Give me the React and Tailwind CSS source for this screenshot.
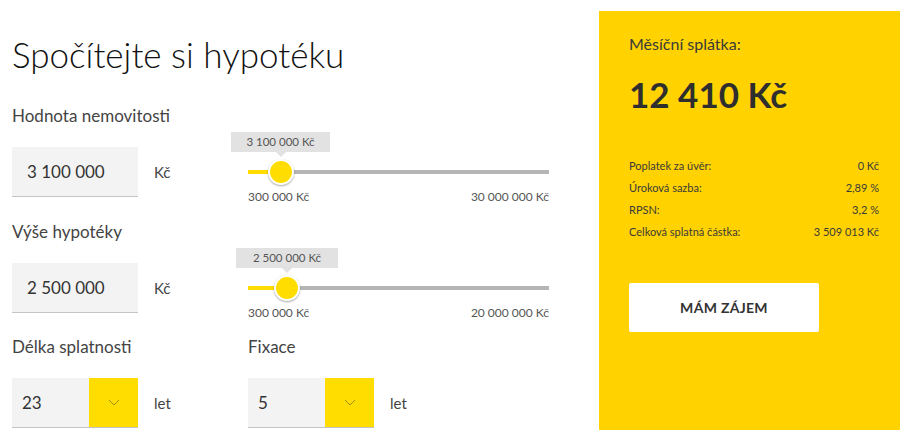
import React from "react";

const sliders = {
  price: { tip: "3 100 000 Kč", min: "300 000 Kč", max: "30 000 000 Kč" },
  loan: { tip: "2 500 000 Kč", min: "300 000 Kč", max: "20 000 000 Kč" },
};

const summary = [
  ["Poplatek za úvěr:", "0 Kč"],
  ["Úroková sazba:", "2,89 %"],
  ["RPSN:", "3,2 %"],
  ["Celková splatná částka:", "3 509 013 Kč"],
];

const Chevron = () => (
  <svg width="12" height="7" viewBox="0 0 12 7" fill="none">
    <path d="M1 1l5 5 5-5" stroke="#9c8a12" strokeWidth="1" />
  </svg>
);

const Slider = ({ tip, min, max, thumb, fill, tipLeft, tipWidth }) => (
  <div className="w-[301px]">
    <div className="relative h-[50px] flex items-center">
      <div className={`h-[4px] bg-[#ffdd00] ${fill}`}></div>
      <div className="h-[4px] flex-1 bg-[#b5b5b5]"></div>
      <div
        className={`absolute top-[-15px] h-[20px] bg-[#e2e2e2] text-[11.5px] leading-[20px] text-[#555] text-center ${tipLeft} ${tipWidth}`}
      >
        {tip}
        <span className="absolute left-1/2 -translate-x-1/2 top-full w-0 h-0 border-x-[5px] border-x-transparent border-t-[5px] border-t-[#e2e2e2]"></span>
      </div>
      <div
        className={`absolute top-[12px] w-[26px] h-[26px] rounded-full bg-[#ffdd00] border-2 border-white shadow-[0_1px_2px_rgba(0,0,0,0.35)] ${thumb}`}
      ></div>
    </div>
    <div className="flex justify-between mt-[-8px] text-[12px] leading-4 text-[#555]">
      <span>{min}</span>
      <span>{max}</span>
    </div>
  </div>
);

const Select = ({ value }) => (
  <div className="flex w-[126px] h-[50px] bg-[#f3f3f3] border-b border-[#c4c4c4]">
    <div className="flex-1 flex items-center pl-[10px] text-[17px] text-[#333]">{value}</div>
    <div className="w-[49px] bg-[#ffdd00] flex items-center justify-center">
      <Chevron />
    </div>
  </div>
);

const App = () => {
  return (
    <div className="w-[900px] h-[430px] bg-white flex overflow-hidden font-['Lato','Open_Sans',sans-serif]">
      <div className="w-[599px] pl-3">
        <h1 className="mt-[32px] text-[35px] leading-[44px] font-light text-[#111]">
          Spočítejte si hypotéku
        </h1>

        <div className="mt-[28px] text-[17px] leading-6 text-[#444]">Hodnota nemovitosti</div>
        <div className="mt-[19px] flex items-start h-[50px]">
          <div className="w-[126px] h-[50px] bg-[#f3f3f3] border-b border-[#c4c4c4] flex items-center pl-[15px] text-[17px] text-[#333]">
            3 100 000
          </div>
          <div className="w-[110px] h-[50px] flex items-center pl-[16px] text-[15px] text-[#444]">Kč</div>
          <Slider {...sliders.price} thumb="left-[20px]" fill="w-[24px]" tipLeft="left-[-17px]" tipWidth="w-[99px]" />
        </div>

        <div className="mt-[23px] text-[17px] leading-6 text-[#444]">Výše hypotéky</div>
        <div className="mt-[19px] flex items-start h-[50px]">
          <div className="w-[126px] h-[50px] bg-[#f3f3f3] border-b border-[#c4c4c4] flex items-center pl-[15px] text-[17px] text-[#333]">
            2 500 000
          </div>
          <div className="w-[110px] h-[50px] flex items-center pl-[16px] text-[15px] text-[#444]">Kč</div>
          <Slider {...sliders.loan} thumb="left-[26px]" fill="w-[30px]" tipLeft="left-[-12px]" tipWidth="w-[102px]" />
        </div>

        <div className="mt-[22px] flex text-[17px] leading-6 text-[#444]">
          <span className="w-[236px]">Délka splatnosti</span>
          <span>Fixace</span>
        </div>
        <div className="mt-[19px] flex items-start">
          <Select value="23" />
          <div className="w-[110px] h-[50px] flex items-center pl-[16px] text-[15px] text-[#444]">let</div>
          <Select value="5" />
          <div className="h-[50px] flex items-center pl-[16px] text-[15px] text-[#444]">let</div>
        </div>
      </div>

      <div className="flex-1 mt-[11px] bg-[#ffd200] pl-[30px] pr-[21px] pt-[21px] text-[#333]">
        <div className="text-[16px] leading-6 text-[#3a3a3a]">Měsíční splátka:</div>
        <div className="mt-[16px] text-[35px] leading-[44px] font-bold text-[#2e2e2e]">12 410 Kč</div>
        <div className="mt-[39px] text-[11px] leading-[22px] text-[#3a3a3a]">
          {summary.map(([label, value]) => (
            <div key={label} className="flex justify-between">
              <span>{label}</span>
              <span>{value}</span>
            </div>
          ))}
        </div>
        <button className="mt-[40px] w-[190px] h-[49px] bg-white rounded-[2px] text-[14px] font-bold tracking-[0.3px] text-[#333]">
          MÁM ZÁJEM
        </button>
      </div>
    </div>
  );
};

export default App;
